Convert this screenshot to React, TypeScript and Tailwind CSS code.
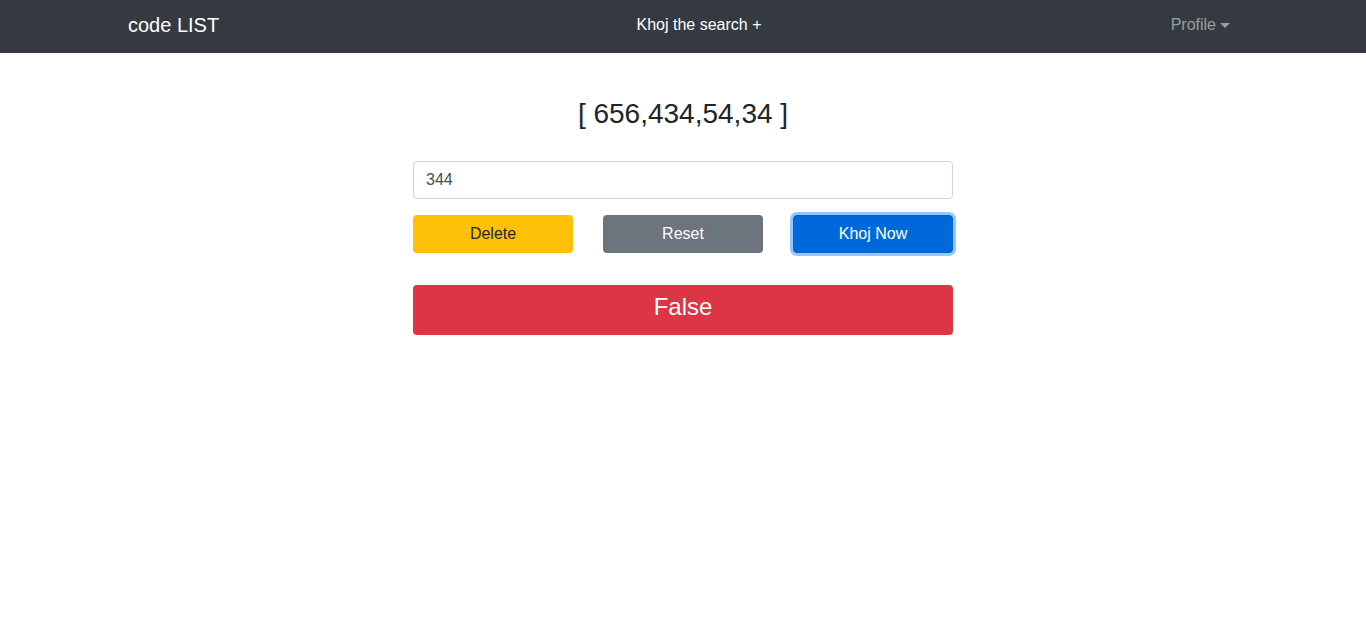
const App = () => {
  const numbers = [656, 434, 54, 34];

  return (
    <div className="min-h-screen bg-white font-['Liberation_Sans',Arial,sans-serif] text-[#212529]">
      <nav className="h-[53px] bg-[#343a40]">
        <div className="mx-auto flex h-full w-[1140px] items-center px-[15px] pb-[4px]">
          <a className="w-[200px] text-[20px] text-white">code LIST</a>
          <div className="flex-1 pl-[32px] text-center">
            <a className="text-[16px] text-white">Khoj the search +</a>
          </div>
          <div className="flex w-[200px] justify-end pr-2">
            <button className="flex items-center text-[16px] text-white/50">
              Profile
              <span className="ml-[4px] mt-[1px] h-0 w-0 border-x-[5px] border-t-[5px] border-x-transparent border-t-white/50" />
            </button>
          </div>
        </div>
      </nav>

      <main className="mx-auto w-[540px] pt-[44px]">
        <h3 className="text-center text-[28px] leading-[34px]">[ {numbers.join(',')} ]</h3>

        <input
          type="text"
          defaultValue="344"
          className="mt-[30px] h-[38px] w-full rounded border border-[#ced4da] px-3 text-[16px] text-[#495057] outline-none"
        />

        <div className="mt-4 flex justify-between">
          <button className="h-[38px] w-[160px] rounded bg-[#ffc107] text-[16px] text-[#212529]">Delete</button>
          <button className="h-[38px] w-[160px] rounded bg-[#6c757d] text-[16px] text-white">Reset</button>
          <button className="h-[38px] w-[160px] rounded border border-[#0062cc] bg-[#0069d9] text-[16px] text-white shadow-[0_0_0_3px_rgba(38,143,255,0.5)]">
            Khoj Now
          </button>
        </div>

        <div className="mt-8 flex h-[50px] items-center justify-center rounded bg-[#dc3545] pb-[6px] text-[24px] text-white">
          False
        </div>
      </main>
    </div>
  );
};

export default App;
